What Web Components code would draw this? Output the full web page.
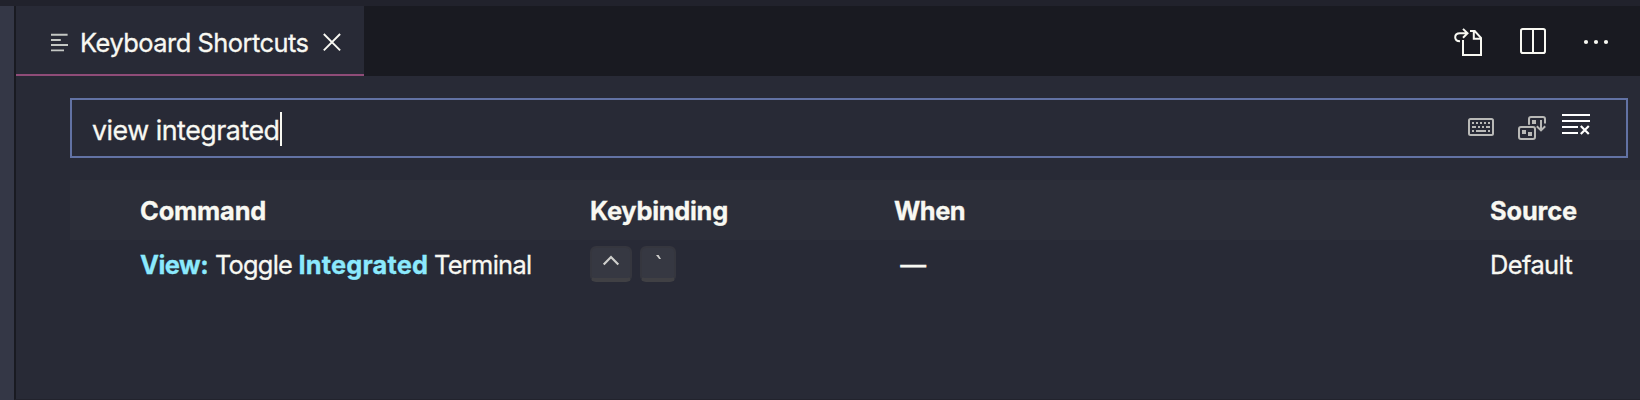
<!DOCTYPE html>
<html lang="en"><head><meta charset="utf-8"><title>Keyboard Shortcuts</title>
<style>html,body{margin:0;height:100%;overflow:hidden;background:#282a36}</style></head>
<body>
<workbench-window></workbench-window>
<script>
const define=(name,html)=>customElements.define(name,class extends HTMLElement{
  constructor(){super();this.attachShadow({mode:'open'}).innerHTML=html;}
});

define('editor-tab',`<style>
:host{display:flex;box-sizing:border-box;width:348px;height:70px;padding:3px 0 0 34px;background:#282a36;border-bottom:2px solid #8f4c78;align-items:center}
svg{display:block;flex:none}
.label{margin-left:12px;padding-top:2px;width:242px;letter-spacing:-.493px;white-space:nowrap}
</style>
<svg width="18" height="20" viewBox="50 32.5 18 20" stroke="#c4c7c4" stroke-width="1.9"><path d="M51 35.2h16.6M51 40.5h9.8M51 45.500h17M51 50.900h13"/></svg>
<span class="label"><slot></slot></span>
<svg width="20" height="20" viewBox="322.5 32.5 20 20" stroke="#f8f8f2" stroke-width="1.9"><path d="M324.3 34.500l16.3 16.3M340.6 34.500l-16.3 16.3"/></svg>`);

define('editor-actions',`<style>
:host{display:flex;align-items:center;height:70px;padding-right:29px;gap:32px}
svg{display:block}
</style>
<svg width="34" height="34" viewBox="1451 24 34 34" fill="none" stroke="#f8f8f2" stroke-width="2"><path d="M1470 31h4.7l6.3 6.8V55h-18V40M1473.8 31v7.8h7.2"/><path d="M1460 41.3c-3.2 0-4.8-1.6-4.8-4s1.600-4 4.800-4h7M1463 28.900l4.500 4.400-4.500 4.400"/></svg>
<svg width="32" height="34" viewBox="1517 24 32 34" fill="none" stroke="#f8f8f2" stroke-width="2"><rect x="1521" y="29" width="24" height="24" rx="1.800"/><path d="M1533 29v24"/></svg>
<svg width="30" height="34" viewBox="1581 25 30 34" fill="#f8f8f2"><circle cx="1586" cy="43" r="2.100"/><circle cx="1596" cy="43" r="2.100"/><circle cx="1606" cy="43" r="2.100"/></svg>`);

define('search-box',`<style>
:host{display:flex;box-sizing:border-box;width:1558px;height:60px;border:2px solid #6272a4;padding:0 34px 0 20px;align-items:center}
.value{width:187.500px;font-size:26.800px;letter-spacing:-.48px;white-space:nowrap;padding-top:4px}
.caret{width:2px;height:34px;background:#f8f8f2;margin-left:.5px;margin-top:2px}
svg{display:block;margin-left:auto}
</style>
<span class="value"><slot></slot></span><span class="caret"></span>
<svg width="126" height="30" viewBox="1466 113 126 30" fill="none" stroke="#b9b9b7" stroke-width="2">
<rect x="1469" y="119" width="24" height="16" rx="1.500"/>
<path d="M1472 123h2m2 0h2m2 0h2m2 0h2m2 0h2M1472 127h4m2 0h2m2 0h2m2 0h4M1472 131h2m2 0h10m2 0h2"/>
<rect x="1519" y="127" width="16" height="12" rx="2"/>
<path d="M1529 124.700V119q0-2 2-2h12q2 0 2 2v4.500M1541 120v10M1536.800 126.200l4.200 4.200 4.200-4.200"/>
<path fill="#b9b9b7" stroke="none" d="M1522 130h4v4h-4zM1528 132h4v4h-4zM1532 120h4v4h-4z"/>
<g stroke="#fff"><path d="M1562 115h28M1562 121h28M1562 127h16M1562 133h16"/><path stroke-width="2.200" d="M1580.800 126l8 8M1588.800 126l-8 8"/></g>
</svg>`);

define('key-cap',`<style>
:host{display:flex;box-sizing:border-box;height:36px;border:2px solid #35363e;border-bottom:4px solid #404044;border-radius:6px;background:#363842;justify-content:center}
svg{display:block}
</style><slot></slot>`);

define('binding-row',`<style>
:host{display:grid;box-sizing:border-box;grid-template-columns:450px 304px 596px 1fr;align-items:center;height:48px;padding-left:70px;white-space:nowrap}
:host([header]){height:60px;background:#2c2e39;font-weight:700}
:host([header]) ::slotted(span){padding-top:2px}
</style><slot></slot>`);

define('shortcut-table',`<style>
:host{display:block}
i{font-style:normal}
b{color:#8be9fd}
.keys{display:flex;gap:8px}
.cmd{display:flex}
.cmd,.text{padding-top:2px}
.when{padding-left:6.500px;-webkit-text-stroke-width:.7px}
.ctrl{width:42px}.tick{width:36px}
</style>
<binding-row header><span style="letter-spacing:-.15px">Command</span><span style="letter-spacing:-.28px">Keybinding</span><span style="letter-spacing:-.5px">When</span><span style="letter-spacing:-.13px">Source</span></binding-row>
<binding-row>
<span class="cmd"><b style="width:75px;letter-spacing:-.5px">View:</b><i style="width:83.500px;letter-spacing:-.784px">Toggle</i><b style="width:135.500px;letter-spacing:.15px">Integrated</b><i style="letter-spacing:-.688px">Terminal</i></span>
<span class="keys"><key-cap class="ctrl"><svg width="20" height="30" viewBox="0 0 20 30" fill="none" stroke="#cfcfcc" stroke-width="2.200"><path d="M2.700 16.500l7.300-7.500 7.300 7.500"/></svg></key-cap><key-cap class="tick"><svg width="20" height="30" viewBox="0 0 20 30" fill="#cfcfcc"><path d="M8 7h2.600l2.400 4h-1.800z"/></svg></key-cap></span>
<span class="text when">—</span>
<span class="text" style="letter-spacing:-.57px">Default</span>
</binding-row>`);

define('workbench-window',`<style>
:host{display:grid;box-sizing:border-box;height:400px;grid-template:6px 1fr/14px 1fr;background:#282a36;color:#f8f8f2;font:400 25.400px/32px Inter,"Liberation Sans",sans-serif;-webkit-text-stroke-width:.3px}
.top{grid-column:1/3;background:#21222c}
.side{background:#343746}
main{border-left:2px solid #191a21;border-bottom:1px solid #22232d;min-width:0}
header{display:flex;justify-content:space-between;background:#191a21}
.body{padding:22px 0 0 54px}
shortcut-table{margin-top:22px}
</style>
<div class="top"></div><div class="side"></div>
<main><header><editor-tab>Keyboard Shortcuts</editor-tab><editor-actions></editor-actions></header>
<div class="body"><search-box>view integrated</search-box><shortcut-table></shortcut-table></div></main>`);
</script></body></html>
